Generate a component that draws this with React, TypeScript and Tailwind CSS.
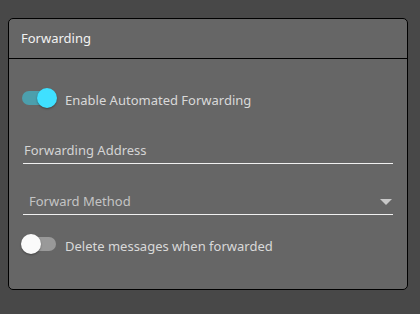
import { useState } from "react";

function Toggle({ on, onChange }: { on: boolean; onChange: () => void }) {
  return (
    <button type="button" onClick={onChange} className="relative h-[24px] w-[38px] shrink-0">
      <span
        className={`absolute left-[1px] top-[5px] h-[14px] w-[34px] rounded-full ${on ? "bg-[#4c9fad]" : "bg-[#999999]"}`}
      />
      <span
        className={`absolute top-[2px] h-[20px] w-[20px] rounded-full shadow-[0_1px_2px_rgba(0,0,0,0.35)] ${
          on ? "left-[16px] bg-[#3fe0ff]" : "left-0 bg-[#fafafa]"
        }`}
      />
    </button>
  );
}

export default function App() {
  const [enabled, setEnabled] = useState(true);
  const [del, setDel] = useState(false);

  return (
    <div
      className="h-[314px] w-[420px] bg-[#484848] pt-[18px] pl-[8px]"
      style={{ fontFamily: '"Noto Sans", "Open Sans", sans-serif' }}
    >
      <div className="flex h-[272px] w-[400px] flex-col rounded-[5px] border border-black bg-[#666666]">
        <div className="flex h-[40px] items-center border-b border-black px-[12px] text-[13px] text-[#f2f2f2]">
          Forwarding
        </div>
        <div className="flex flex-col px-[14px] pt-[30px]">
          <div className="flex h-[24px] items-center gap-[6px]">
            <span className="-ml-[2px]">
              <Toggle on={enabled} onChange={() => setEnabled(!enabled)} />
            </span>
            <span className="text-[13px] text-[#d9d9d9]">Enable Automated Forwarding</span>
          </div>

          <div className="mt-[26px] flex h-[25px] items-center border-b border-[#f0f0f0] pl-[1px] text-[13px] text-[#d4d4d4]">
            Forwarding Address
          </div>

          <div className="mt-[26px] flex h-[25px] items-center justify-between border-b border-[#f0f0f0] pl-[6px] text-[13px] text-[#c4c4c4]">
            <span>Forward Method</span>
            <svg width="12" height="6" viewBox="0 0 12 6" className="mr-[1px]">
              <path d="M0 0h12L6 6z" fill="#c8c8c8" />
            </svg>
          </div>

          <div className="mt-[20px] flex h-[24px] items-center gap-[6px]">
            <span className="-ml-[2px]">
              <Toggle on={del} onChange={() => setDel(!del)} />
            </span>
            <span className="text-[13px] text-[#d9d9d9]">Delete messages when forwarded</span>
          </div>
        </div>
      </div>
    </div>
  );
}
